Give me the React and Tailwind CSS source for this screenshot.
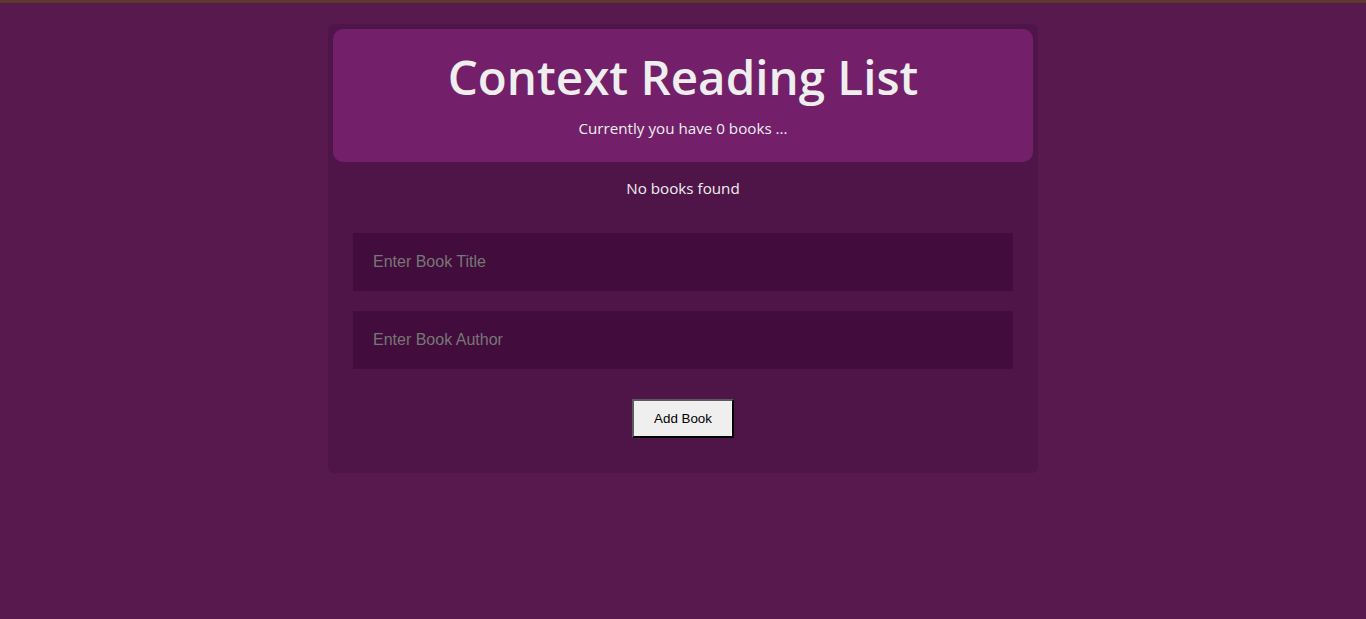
export default function App() {
  return (
    <div className="min-h-[619px] bg-[#58194f] flex flex-col">
      <div className="h-[3px] bg-[#5b3b2e]" />
      <div className="flex justify-center pt-[21px]">
        <div className="w-[710px] bg-[#4f1549] rounded-[6px] p-[5px] flex flex-col font-['Open_Sans',sans-serif] text-[#eeeeee]">
          <div className="bg-[#731f6a] rounded-[10px] flex flex-col items-center pt-[14px] pb-[22px]">
            <h1 className="text-[47.5px] leading-[68px] font-semibold">Context Reading List</h1>
            <p className="mt-[5px] text-[15.2px] leading-[24px]">Currently you have 0 books ...</p>
          </div>
          <div className="flex flex-col items-stretch px-[20px] pb-[30px]">
            <p className="mt-[14px] text-center text-[15.2px] leading-[24px]">No books found</p>
            <input
              className="mt-[33px] h-[58px] bg-[#420c3c] px-[20px] text-[16px] font-['Liberation_Sans',sans-serif] text-[#eeeeee] placeholder:text-[#777777] outline-none"
              placeholder="Enter Book Title"
            />
            <input
              className="mt-[20px] h-[58px] bg-[#420c3c] px-[20px] text-[16px] font-['Liberation_Sans',sans-serif] text-[#eeeeee] placeholder:text-[#777777] outline-none"
              placeholder="Enter Book Author"
            />
            <div className="flex justify-center mt-[30px]">
              <button className="w-[102px] h-[39px] bg-[#efefef] text-black text-[13.33px] font-['Liberation_Sans',sans-serif] border-2 border-t-[#5a5a5a] border-l-[#5a5a5a] border-r-black border-b-black">
                Add Book
              </button>
            </div>
          </div>
        </div>
      </div>
    </div>
  );
}
